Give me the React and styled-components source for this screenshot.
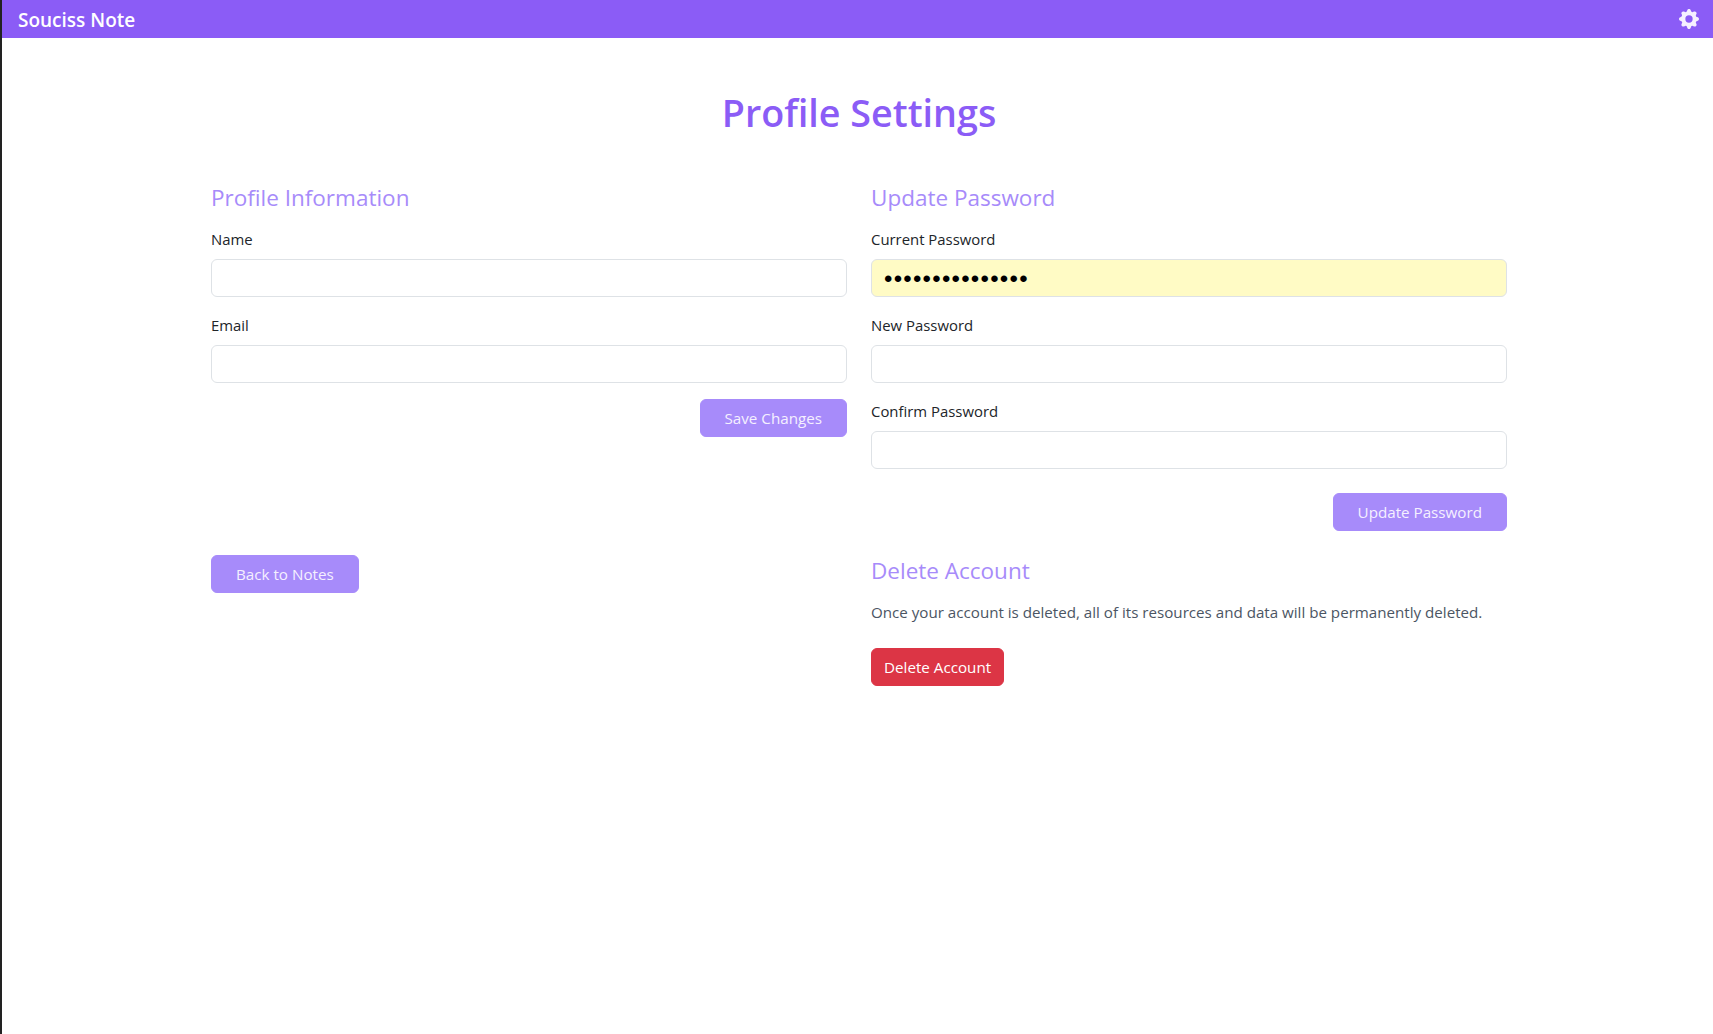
import styled, { createGlobalStyle } from 'styled-components';
import { BsGearFill } from 'react-icons/bs';

const GlobalStyle = createGlobalStyle`
  html, body {
    margin: 0;
    padding: 0;
    background: #ffffff;
  }
  body {
    font-family: "Open Sans", "Noto Sans", "Liberation Sans", sans-serif;
    color: #212529;
  }
`;

export default function App() {
  return (
    <Page>
      <GlobalStyle />
      <Navbar>
        <Brand>Souciss Note</Brand>
        <GearButton aria-label='Settings'>
          <BsGearFill size={20} />
        </GearButton>
      </Navbar>
      <Content>
        <Main>
          <Title>Profile Settings</Title>
          <Grid>
            <form>
              <SectionTitle>Profile Information</SectionTitle>
              <Field>
                <Label>Name</Label>
                <Input type='text' />
              </Field>
              <Field>
                <Label>Email</Label>
                <Input type='email' />
              </Field>
              <Actions>
                <Button type='button'>Save Changes</Button>
              </Actions>
            </form>

            <form>
              <SectionTitle>Update Password</SectionTitle>
              <Field>
                <Label>Current Password</Label>
                <Input type='password' defaultValue='aaaaaaaaaaaaaaa' $autofilled />
              </Field>
              <Field>
                <Label>New Password</Label>
                <Input type='password' />
              </Field>
              <Field>
                <Label>Confirm Password</Label>
                <Input type='password' />
              </Field>
              <Actions $top={24}>
                <Button type='button'>Update Password</Button>
              </Actions>
            </form>

            <div>
              <Button type='button'>Back to Notes</Button>
            </div>

            <section>
              <SectionTitle>Delete Account</SectionTitle>
              <Hint>
                Once your account is deleted, all of its resources and data will be
                permanently deleted.
              </Hint>
              <DangerButton type='button'>Delete Account</DangerButton>
            </section>
          </Grid>
        </Main>
      </Content>
    </Page>
  );
}

const Page = styled.div`
  min-height: 1034px;
  border-left: 2px solid #222222;
  box-sizing: border-box;
`;

const Navbar = styled.header`
  display: flex;
  align-items: center;
  justify-content: space-between;
  height: 38px;
  padding: 2px 14px 0 16px;
  box-sizing: border-box;
  background-color: #8b5cf6;
  color: #ffffff;
`;

const Brand = styled.div`
  font-size: 19px;
  font-weight: 600;
`;

const GearButton = styled.div`
  display: flex;
  color: #f5f0ff;
  margin-top: -2px;
`;

const Content = styled.div`
  padding-left: 3px;
`;

const Main = styled.main`
  width: 1296px;
  margin: 0 auto;
  padding-top: 48px;
`;

const Title = styled.h1`
  margin: 0 0 42px;
  font-size: 37.7px;
  line-height: 54px;
  font-weight: 600;
  text-align: center;
  color: #8b5cf6;
`;

const Grid = styled.div`
  display: grid;
  grid-template-columns: 1fr 1fr;
  gap: 24px;
`;

const SectionTitle = styled.h2`
  margin: 0 0 13px;
  font-size: 22.5px;
  line-height: 32px;
  font-weight: 400;
  color: #a78bfa;
`;

const Field = styled.div`
  margin-bottom: 16px;
`;

const Label = styled.label`
  display: block;
  margin-bottom: 8px;
  font-size: 14.9px;
  line-height: 24px;
`;

const Input = styled.input`
  display: block;
  width: 100%;
  height: 38px;
  box-sizing: border-box;
  padding: 8px 12px 6px;
  border: 1px solid #dee2e6;
  border-radius: 6px;
  font-family: "Liberation Sans", sans-serif;
  font-size: 24px;
  letter-spacing: 1.25px;
  background-color: ${(p) => (p.$autofilled ? '#fffbc5' : '#ffffff')};
  color: #000000;
`;

// margin collapses with the last field's 16px bottom margin
const Actions = styled.div`
  display: flex;
  justify-content: flex-end;
  margin-top: ${(p) => p.$top || 0}px;
`;

const Button = styled.button`
  height: 38px;
  padding: 0 24px;
  border: 1px solid #a78bfa;
  border-radius: 6px;
  background-color: #a78bfa;
  color: #f5f0ff;
  font-family: inherit;
  font-size: 15.2px;
`;

const DangerButton = styled(Button)`
  padding: 0 12px;
  border-color: #dc3545;
  background-color: #dc3545;
  color: #ffffff;
`;

const Hint = styled.p`
  margin: 0 0 24px;
  font-size: 15.15px;
  line-height: 24px;
  color: #4b5563;
`;
